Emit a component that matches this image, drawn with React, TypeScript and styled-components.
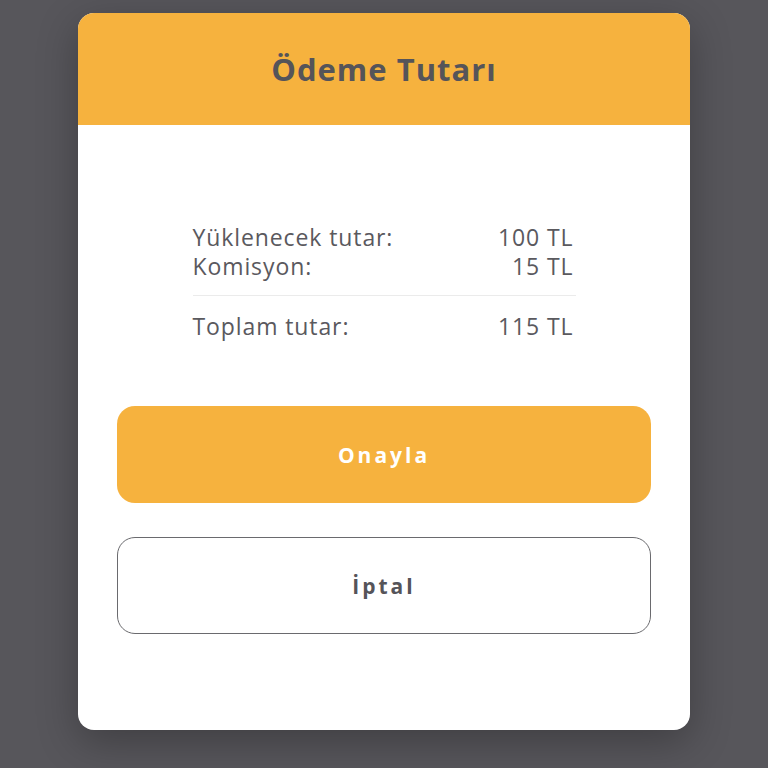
import styled, { createGlobalStyle } from "styled-components";

const GlobalStyle = createGlobalStyle`
    html, body {
        margin: 0;
        padding: 0;
        background: #57565b;
        font-family: "Open Sans", "Noto Sans", "DejaVu Sans", sans-serif;
    }
`;

const Page = styled.main`
    min-height: 768px;
    display: flex;
    justify-content: center;
    align-items: flex-start;
    padding-top: 13px;
    box-sizing: border-box;
`;

const Card = styled.section`
    width: 612px;
    height: 717px;
    background: #ffffff;
    border-radius: 16px;
    overflow: hidden;
    box-shadow: 0 12px 40px rgba(0, 0, 0, 0.28);
    display: flex;
    flex-direction: column;
`;

const Header = styled.header`
    height: 112px;
    background: #f6b23e;
    display: flex;
    align-items: center;
    justify-content: center;
`;

const Title = styled.h1`
    margin: 0;
    font-size: 31px;
    font-weight: 700;
    color: #555459;
    letter-spacing: 1px;
`;

const Body = styled.div`
    display: flex;
    flex-direction: column;
    align-items: center;
    padding: 98px 39px 0;
`;

const Summary = styled.div`
    width: 383px;
    display: flex;
    flex-direction: column;
`;

const Row = styled.div`
    display: flex;
    justify-content: space-between;
    font-size: 23px;
    line-height: 29px;
    letter-spacing: 0.9px;
    color: #5a595e;
    padding-right: 2px;
`;

const Divider = styled.hr`
    border: none;
    border-top: 1px solid #ebebeb;
    margin: 14px 0 16px;
    width: 100%;
`;

const Actions = styled.div`
    width: 100%;
    display: flex;
    flex-direction: column;
    gap: 34px;
    margin-top: 65px;
`;

const Button = styled.button<{ $primary?: boolean }>`
    height: 97px;
    width: 100%;
    border-radius: 18px;
    font-family: inherit;
    font-size: 21px;
    font-weight: 700;
    letter-spacing: 3px;
    cursor: pointer;
    background: ${p => (p.$primary ? "#f6b23e" : "#ffffff")};
    color: ${p => (p.$primary ? "#ffffff" : "#555459")};
    border: ${p => (p.$primary ? "none" : "1.5px solid #6a6a6e")};
`;

const rows = [
    { label: "Yüklenecek tutar:", value: "100 TL" },
    { label: "Komisyon:", value: "15 TL" },
];

export default function App() {
    return (
        <>
            <GlobalStyle />
            <Page>
                <Card>
                    <Header>
                        <Title>Ödeme Tutarı</Title>
                    </Header>
                    <Body>
                        <Summary>
                            {rows.map(r => (
                                <Row key={r.label}>
                                    <span>{r.label}</span>
                                    <span>{r.value}</span>
                                </Row>
                            ))}
                            <Divider />
                            <Row>
                                <span>Toplam tutar:</span>
                                <span>115 TL</span>
                            </Row>
                        </Summary>
                        <Actions>
                            <Button $primary>Onayla</Button>
                            <Button>İptal</Button>
                        </Actions>
                    </Body>
                </Card>
            </Page>
        </>
    );
}
